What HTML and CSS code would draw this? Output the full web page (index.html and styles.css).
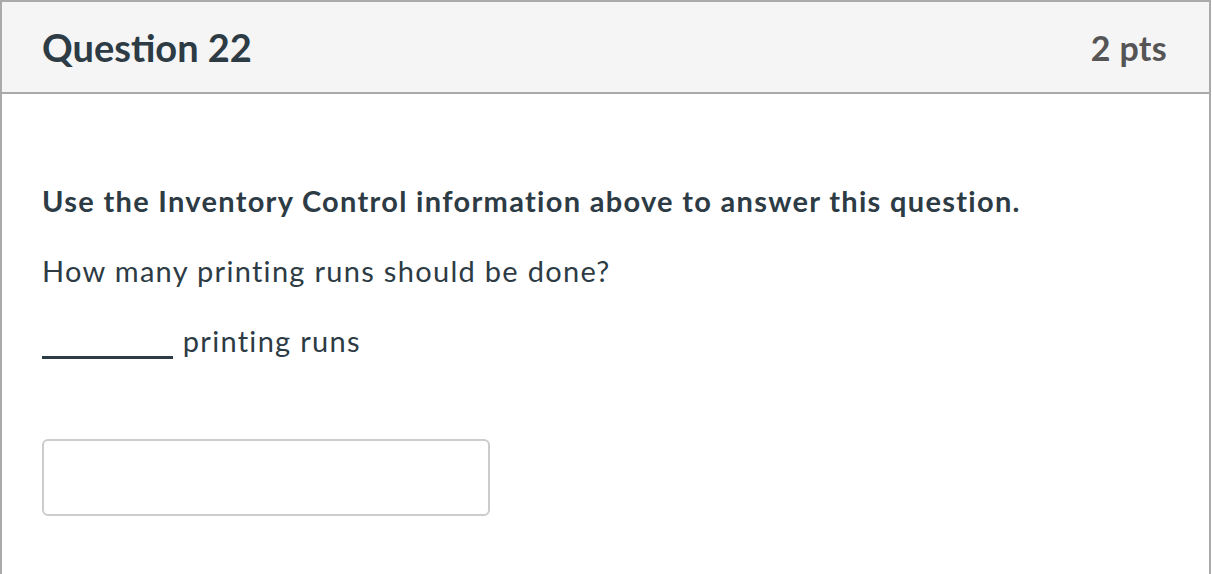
FILE: index.html
```html
<!DOCTYPE html>
<html lang="en">
<head>
<meta charset="utf-8">
<title>Question 22</title>
<link rel="stylesheet" href="styles.css">
</head>
<body>
<div class="question">
  <div class="header">
    <h2 class="title">Question 22</h2>
    <span class="points">2 pts</span>
  </div>
  <div class="content">
    <p class="lead">Use the Inventory Control information above to answer this question.</p>
    <p>How many printing runs should be done?</p>
    <p><span class="blank"></span> printing runs</p>
    <input class="answer" type="text" aria-label="Answer">
  </div>
</div>
</body>
</html>
```
FILE: styles.css
```css
html, body {
  margin: 0;
  padding: 0;
  background: #fff;
}
body {
  font-family: Lato, "Liberation Sans", sans-serif;
  color: #2d3b45;
}
.question {
  width: 1207px;
  height: 576px;
  border: 2px solid #aaaaaa;
  border-bottom: none;
}
.header {
  height: 90px;
  background: #f5f5f5;
  border-bottom: 2px solid #aaaaaa;
  display: flex;
  align-items: center;
  justify-content: space-between;
  padding: 0 42px 0 40px;
}
.title {
  margin: 0;
  font-size: 38px;
  font-weight: 700;
  color: #2d3b45;
}
.points {
  font-size: 34px;
  font-weight: 700;
  color: #555555;
  letter-spacing: 0.3px;
}
.content {
  padding: 86px 40px 0 40px;
}
.content p {
  margin: 0 0 28px 0;
  font-size: 29px;
  line-height: 42px;
  letter-spacing: 1.3px;
}
.content p.lead {
  font-weight: 700;
}
.blank {
  display: inline-block;
  width: 131px;
  height: 0;
  border-bottom: 3px solid #2d3b45;
  vertical-align: -7px;
  margin-right: 1px;
}
.answer {
  display: block;
  box-sizing: border-box;
  margin-top: 77px;
  width: 448px;
  height: 77px;
  border: 2px solid #cccccc;
  border-radius: 6px;
  background: #fff;
  font-family: Lato, "Liberation Sans", sans-serif;
  font-size: 28px;
  padding: 0 12px;
  outline: none;
}
```
